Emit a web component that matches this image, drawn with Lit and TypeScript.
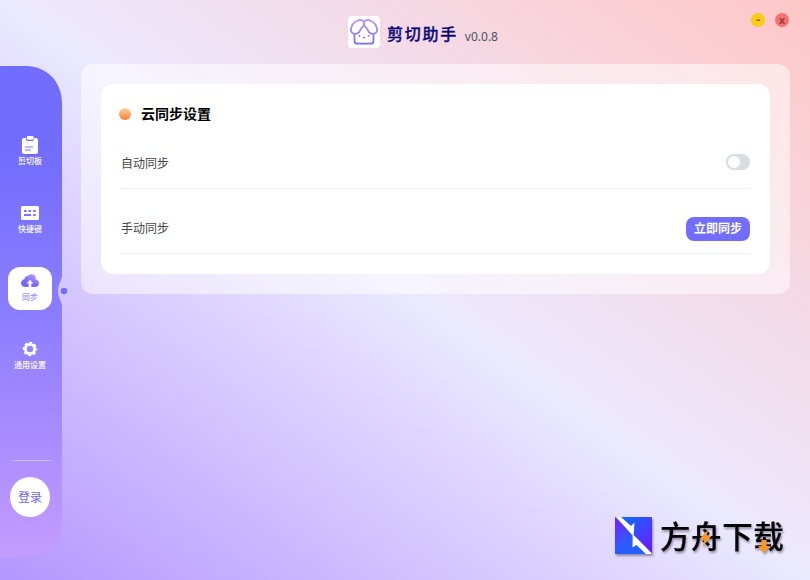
import { LitElement, html, css, svg } from "lit";
import { customElement } from "lit/decorators.js";

const clipboardIcon = svg`<svg width="18" height="20" viewBox="0 0 18 20">
  <path fill="#fff" d="M3 3h2v1.200C5 5.400 6 6 7 6h4c1 0 2-.6 2-1.800V3h2a2 2 0 0 1 2 2v12a2 2 0 0 1-2 2H3a2 2 0 0 1-2-2V5a2 2 0 0 1 2-2z"/>
  <rect x="5.800" y="1" width="6.700" height="3.700" rx="1.200" fill="#fff"/>
  <path stroke="#776eff" stroke-width="1.200" d="M4 12h8M4 15h6"/></svg>`;

const keyboardIcon = svg`<svg width="18" height="14" viewBox="0 0 18 14">
  <rect width="18" height="14" rx="1.500" fill="#fff"/>
  <path fill="#7b72ff" d="M3 4h2.600v2H3zM7.500 4H10v2H7.500zM12.200 4h2.500v2h-2.500zM3 8h7v2H3zM12.200 8h2.500v2h-2.500z"/></svg>`;

const cloudIcon = svg`<svg width="18" height="14" viewBox="0 0 18 14">
  <defs><linearGradient id="cloud" x1="1" y1="0" x2=".45" y2="1">
    <stop offset="0" stop-color="#c79cff"/><stop offset=".75" stop-color="#746bfb"/></linearGradient></defs>
  <path fill="url(#cloud)" d="M3.300 5.200C3.600 2.600 5.600 2 6.500 2.100 7.800.7 9.300.3 10.500.3c3.300 0 4.600 2.300 4.300 5.100C16.800 5.700 18 7.200 18 9.300c0 2.200-1.700 3.700-3.800 3.700H4C1.700 13 0 11.500 0 9.300c0-2 1.400-3.700 3.300-4.100z"/>
  <path fill="#fff" d="M9 5.800 12.300 9.500h-2v3.500H7.700V9.500h-2z"/></svg>`;

const gearIcon = svg`<svg width="16" height="16" viewBox="0 0 16 16">
  <g fill="none" stroke="#fff"><circle cx="8" cy="8" r="4.600" stroke-width="2.800"/>
  <circle cx="8" cy="8" r="6.200" stroke-width="2" stroke-dasharray="2.900 1.970" stroke-dashoffset="1.450"/></g></svg>`;

const shearIcon = svg`<svg width="32" height="32" viewBox="0 0 32 32">
  <defs><linearGradient id="logo" gradientUnits="userSpaceOnUse" x1="0" y1="4" x2="0" y2="28">
    <stop offset="0" stop-color="#c08fff"/><stop offset="1" stop-color="#746cff"/></linearGradient></defs>
  <g fill="none" stroke="url(#logo)" stroke-width="1.800" stroke-linecap="round" stroke-linejoin="round">
    <path d="M6.500 18v6.700q0 3 3 3h13q3 0 3-3V18"/>
    <path d="M16 5.600C14.300 4 11.500 3.700 9.300 4.700 5.800 6.300 3.500 9.800 3 13c-.4 3 1.300 4.800 4 4.800 2.200 0 3.800-.6 4.500-2.300.8-2 1.600-3.600 3.200-4.900Q16 9.600 16 8z"/>
    <path d="M16 5.600c1.700-1.600 4.500-1.900 6.700-.9 3.500 1.600 5.800 5.100 6.300 8.300.4 3-1.300 4.800-4 4.800-2.200 0-3.800-.6-4.500-2.300-.8-2-1.600-3.600-3.200-4.900Q16 9.600 16 8z"/>
  </g>
  <path fill="none" stroke="#817aff" stroke-width="1.200" stroke-linecap="round" d="M15.200 21.500q.8.800 1.600 0"/>
  <g fill="#746cff"><circle cx="11.500" cy="19.900" r=".9"/><circle cx="20.500" cy="19.900" r=".9"/></g></svg>`;

const siteLogo = svg`<svg width="37" height="37" viewBox="0 0 37 37">
  <defs>
    <linearGradient id="tileB" x1="0" y1="0" x2="1" y2="1">
    <stop offset="0" stop-color="#7b1cff"/><stop offset=".5" stop-color="#2b5bff"/><stop offset="1" stop-color="#1c6bff"/></linearGradient>
    <linearGradient id="tileC" x1="0" y1="0" x2="1" y2="1">
    <stop offset=".2" stop-color="#1963ff"/><stop offset="1" stop-color="#7315ff"/></linearGradient></defs>
  <path fill="url(#tileC)" d="M0 0h37v37z"/><path fill="url(#tileB)" d="M0 0v37h37z"/>
  <path fill="#fff" d="M1 0h5l10 9 3.500-3.500L18.700 18 36.500 36v1H31l-9.500-9-4 2.500.2-12z"/></svg>`;

@customElement("app-root")
export class AppRoot extends LitElement {
  static styles = css`
    :host {
      display: grid;
      grid-template: 64px 1fr / 81px 1fr;
      position: relative;
      width: 810px;
      height: 580px;
      overflow: hidden;
      box-sizing: border-box;
      background: linear-gradient(to top right, #b496ff, #ebe9ff 50%, #ffc7c7);
      font-family: "Noto Sans", "Noto Sans CJK SC", sans-serif;
      color: #333;
    }
    svg { display: block; }
    header {
      grid-column: 1 / 3;
      display: flex;
      justify-content: center;
      padding: 16px 0 0 36px;
      box-sizing: border-box;
    }
    .mark { width: 32px; height: 32px; border-radius: 4px; background: #fff; }
    h1 {
      margin: 2px 0 0 7px;
      font: 500 16px/30px "Noto Sans CJK SC", sans-serif;
      letter-spacing: 1.700px;
      color: #0b0877;
      -webkit-text-stroke: 0.3px #0b0877;
      white-space: nowrap;
    }
    .version { margin: 11px 0 0 7px; font: 12px/20px "Noto Sans", sans-serif; color: #4b5563; }
    .window { position: absolute; top: 13px; right: 21px; display: flex; gap: 10px; }
    .window span {
      width: 14px; height: 14px; border-radius: 50%;
      font: 700 11px/14px "Noto Sans", sans-serif;
      text-align: center;
    }
    .window .min { background: #facc15; color: #8a6d10; font-size: 13px; line-height: 12px; }
    .close { background: #f87171; color: #97413f; }
    nav {
      position: relative;
      width: 62px;
      height: 492px;
      margin-top: 1.500px;
      box-sizing: border-box;
      padding-top: 65px;
    }
    .rail { position: absolute; inset: 0; }
    .items { position: relative; display: flex; flex-direction: column; align-items: center; width: 60px; gap: 24px; }
    .item {
      width: 44px; height: 44px; border-radius: 12px;
      display: flex; flex-direction: column; align-items: center;
      color: #fff; font: 500 8px/10px "Noto Sans CJK SC", sans-serif;
      white-space: nowrap;
    }
    .icon { height: 22px; display: flex; align-items: center; margin-top: 3px; }
    .item.active { background: #fff; color: #7b6cff; font-weight: 400; height: 43px; margin-bottom: 1px; }
    .foot { position: relative; width: 60px; display: flex; flex-direction: column; align-items: center; margin-top: 81px; }
    .rule { width: 40px; height: 1px; margin-left: 4px; background: #c7b8f7; }
    .login {
      width: 40px; height: 40px; margin-top: 16px; border-radius: 50%;
      background: #fff; color: #6f66f5;
      font: 12px/39px "Noto Sans CJK SC", sans-serif; text-align: center;
    }
    .panel {
      width: 709px; height: 230px; box-sizing: border-box; padding: 20px;
      border-radius: 12px; background: rgba(255, 255, 255, 0.5);
    }
    .card { height: 190px; box-sizing: border-box; padding: 18px 20px 0; border-radius: 12px; background: #fff; }
    h2 {
      display: flex; align-items: center; gap: 10px; margin: 0 0 0 -2px; height: 24px;
      font: 700 14px/22px "Noto Sans CJK SC", sans-serif; color: #000;
    }
    h2 .title { padding-bottom: 2px; }
    .dot { width: 12px; height: 12px; border-radius: 50%; background: linear-gradient(#f6d6a0, #ff7c30); }
    .row {
      display: flex; align-items: center; justify-content: space-between;
      height: 52px; box-sizing: border-box;
      border-bottom: 1px solid #f1f2f9;
      margin-top: 11px;
      font: 12px/20px "Noto Sans CJK SC", sans-serif; color: #444;
    }
    .row + .row { margin-top: 13px; }
    .toggle { width: 24px; height: 16px; border-radius: 8px; background: #d9dce1; box-sizing: border-box; padding: 2px; margin-bottom: 2px; }
    .toggle::before { content: ""; display: block; width: 12px; height: 12px; border-radius: 50%; background: #fff; }
    .sync {
      width: 64px; height: 24px; border: 0; padding: 0 0 1px; border-radius: 8px; margin-top: 2px;
      background: #726dff; color: #fff; font: 700 12px/22px "Noto Sans CJK SC", sans-serif;
    }
    .site {
      position: absolute; left: 615px; top: 517px; display: flex; gap: 8px;
      filter: drop-shadow(1px 2px 1px rgba(50, 40, 60, 0.45));
    }
    .site-name {
      position: relative; font: 500 30.500px/36px "Noto Sans CJK SC", sans-serif; letter-spacing: 0.600px; color: #050505; white-space: nowrap;
      -webkit-text-stroke: 0.2px #050505;
    }
    .accents { position: absolute; left: 0; top: 0; }
  `;

  private items = [
    { label: "剪切板", icon: clipboardIcon, active: false },
    { label: "快捷键", icon: keyboardIcon, active: false },
    { label: "同步", icon: cloudIcon, active: true },
    { label: "通用设置", icon: gearIcon, active: false },
  ];

  render() {
    return html`
      <header>
        <div class="mark">${shearIcon}</div>
        <h1>剪切助手</h1>
        <span class="version">v0.0.8</span>
      </header>
      <div class="window"><span class="min">-</span><span class="close">x</span></div>
      <nav>
        <svg class="rail" width="70" height="492" viewBox="0 0 70 492">
          <defs><linearGradient id="rail" x1="0" y1="0" x2="0" y2="1">
            <stop offset="0" stop-color="#716cff"/><stop offset=".2" stop-color="#746eff"/>
            <stop offset=".5" stop-color="#8b7dff"/><stop offset="1" stop-color="#c59bff"/></linearGradient></defs>
          <path fill="url(#rail)" d="M0 0h26C46 0 62 15 62 37v172c0 5-4 9-4 16s4 11 4 16v215c0 20-15 35-36 35H0z"/>
          <circle cx="64" cy="225" r="3.200" fill="#746dff"/>
        </svg>
        <div class="items">
          ${this.items.map((i) => html`<div class="item ${i.active ? "active" : ""}">
            <span class="icon">${i.icon}</span><span>${i.label}</span></div>`)}
        </div>
        <div class="foot"><div class="rule"></div><div class="login">登录</div></div>
      </nav>
      <main class="panel">
        <section class="card">
          <h2><span class="dot"></span><span class="title">云同步设置</span></h2>
          <div class="row"><span>自动同步</span><span class="toggle"></span></div>
          <div class="row"><span>手动同步</span><button class="sync">立即同步</button></div>
        </section>
      </main>
      <div class="site">${siteLogo}
        <div class="site-name">方舟下载
          <svg class="accents" width="126" height="40" viewBox="0 0 126 40" fill="#ff951c">
            <path d="m48.500 12-9 10h5l-2 8 9-11h-5z"/>
            <path d="M101.500 23h5v6h3.500l-6 7-6-7h3.500z"/>
          </svg>
        </div>
      </div>
    `;
  }
}
